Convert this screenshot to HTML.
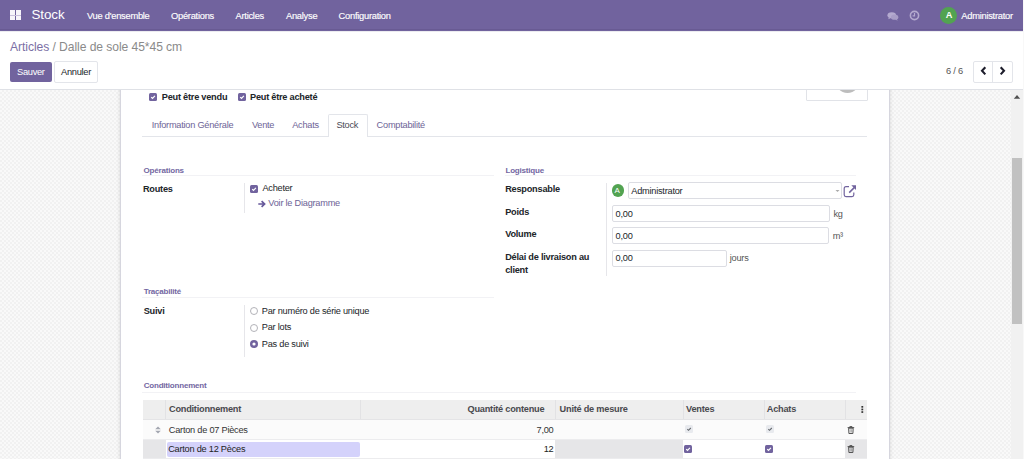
<!DOCTYPE html>
<html><head><meta charset="utf-8"><style>
html,body{margin:0;padding:0;width:1024px;height:459px;overflow:hidden;background:#f5f5f5}
body{position:relative;font-family:"Liberation Sans",sans-serif}
.b{position:absolute;box-sizing:content-box}
.t{position:absolute;white-space:nowrap;font-family:"Liberation Sans",sans-serif}
</style></head><body>
<div class="b" style="left:0px;top:0px;width:1024px;height:459px;background-color:#f6f6f6;background-image:conic-gradient(#f9f9f9 25%,#f1f1f1 0 50%,#f9f9f9 0 75%,#f1f1f1 0);background-size:4px 4px;"></div>
<div class="b" style="left:1023px;top:0px;width:1px;height:459px;background:#f8f8f8;"></div>
<div class="b" style="left:120px;top:80px;width:768px;height:400px;background:#fff;border:1px solid #d6d6de;box-shadow:0 0 4px rgba(0,0,0,0.13)"></div>
<div class="b" style="left:806px;top:59.3px;width:60px;height:39.5px;border:1px solid #e1e3e8;border-radius:1px;background:#fff;overflow:hidden"><div style="position:absolute;left:27.5px;top:7.9px;width:25px;height:25px;border-radius:50%;background:#bdbdbd"></div></div>
<svg class="b" style="left:149px;top:93px" width="8" height="8" viewBox="0 0 8 8"><rect x="0" y="0" width="8" height="8" rx="1.5" fill="#71639e"/><path d="M2.2 4.1 L3.5 5.3 L5.9 2.8" fill="none" stroke="#fff" stroke-width="1.2"/></svg>
<div class="t" style="left:161.8px;top:92.81px;font-size:9.2px;line-height:9.2px;color:#212529;font-weight:700;letter-spacing:-0.23px;">Peut être vendu</div>
<svg class="b" style="left:237.8px;top:93px" width="8" height="8" viewBox="0 0 8 8"><rect x="0" y="0" width="8" height="8" rx="1.5" fill="#71639e"/><path d="M2.2 4.1 L3.5 5.3 L5.9 2.8" fill="none" stroke="#fff" stroke-width="1.2"/></svg>
<div class="t" style="left:250px;top:92.81px;font-size:9.2px;line-height:9.2px;color:#212529;font-weight:700;letter-spacing:-0.23px;">Peut être acheté</div>
<div class="b" style="left:142px;top:135.5px;width:725px;height:1.0px;background:#e3e5ea;"></div>
<div class="b" style="left:327.5px;top:114px;width:38.5px;height:21.6px;border:1px solid #e3e5ea;border-bottom:none;border-radius:2px 2px 0 0;background:#fff"></div>
<div class="t" style="left:151.7px;top:121.01px;font-size:9.2px;line-height:9.2px;color:#6d6396;letter-spacing:-0.23px;">Information Générale</div>
<div class="t" style="left:251.9px;top:121.01px;font-size:9.2px;line-height:9.2px;color:#6d6396;letter-spacing:-0.23px;">Vente</div>
<div class="t" style="left:292.2px;top:121.01px;font-size:9.2px;line-height:9.2px;color:#6d6396;letter-spacing:-0.23px;">Achats</div>
<div class="t" style="left:336.4px;top:121.01px;font-size:9.2px;line-height:9.2px;color:#4a4a55;letter-spacing:-0.23px;">Stock</div>
<div class="t" style="left:376.6px;top:121.01px;font-size:9.2px;line-height:9.2px;color:#6d6396;letter-spacing:-0.23px;">Comptabilité</div>
<div class="t" style="left:143.6px;top:166.83px;font-size:8px;line-height:8px;color:#7367a2;font-weight:700;letter-spacing:-0.2px;">Opérations</div>
<div class="b" style="left:142px;top:174.5px;width:352px;height:1.0px;background:#f2f2f5;"></div>
<div class="t" style="left:505.5px;top:166.83px;font-size:8px;line-height:8px;color:#7367a2;font-weight:700;letter-spacing:-0.2px;">Logistique</div>
<div class="b" style="left:505px;top:174.5px;width:351px;height:1.0px;background:#f2f2f5;"></div>
<div class="t" style="left:142.9px;top:185.21px;font-size:9.2px;line-height:9.2px;color:#212529;font-weight:700;letter-spacing:-0.23px;">Routes</div>
<div class="b" style="left:243.5px;top:183px;width:1.0px;height:30px;background:#e6e6ea;"></div>
<svg class="b" style="left:250px;top:185px" width="8" height="8" viewBox="0 0 8 8"><rect x="0" y="0" width="8" height="8" rx="1.5" fill="#71639e"/><path d="M2.2 4.1 L3.5 5.3 L5.9 2.8" fill="none" stroke="#fff" stroke-width="1.2"/></svg>
<div class="t" style="left:262.4px;top:184.41px;font-size:9.2px;line-height:9.2px;color:#212529;letter-spacing:-0.23px;">Acheter</div>
<svg class="b" style="left:258px;top:199.8px" width="8" height="8" viewBox="0 0 8 8"><path d="M0.3 4 H6.3 M3.6 1.1 L6.6 4 L3.6 6.9" fill="none" stroke="#66589a" stroke-width="1.7"/></svg>
<div class="t" style="left:268.3px;top:198.81px;font-size:9.2px;line-height:9.2px;color:#6d6396;letter-spacing:-0.23px;">Voir le Diagramme</div>
<div class="t" style="left:505.2px;top:185.01px;font-size:9.2px;line-height:9.2px;color:#212529;font-weight:700;letter-spacing:-0.23px;">Responsable</div>
<div class="t" style="left:505.2px;top:207.51px;font-size:9.2px;line-height:9.2px;color:#212529;font-weight:700;letter-spacing:-0.23px;">Poids</div>
<div class="t" style="left:505.2px;top:229.51px;font-size:9.2px;line-height:9.2px;color:#212529;font-weight:700;letter-spacing:-0.23px;">Volume</div>
<div class="t" style="left:505.2px;top:252.81px;font-size:9.2px;line-height:9.2px;color:#212529;font-weight:700;letter-spacing:-0.23px;">Délai de livraison au</div>
<div class="t" style="left:505.2px;top:265.51px;font-size:9.2px;line-height:9.2px;color:#212529;font-weight:700;letter-spacing:-0.23px;">client</div>
<div class="b" style="left:606px;top:183px;width:1px;height:92.5px;background:#e6e6ea;"></div>
<div class="b" style="left:611.5px;top:184px;width:12.5px;height:12.5px;border-radius:50%;background:#52a351"></div>
<div class="t" style="left:614.5px;top:186.83px;font-size:8px;line-height:8px;color:#fff;">A</div>
<div class="b" style="left:627.5px;top:182px;width:212.0px;height:15.300000000000011px;border:1px solid #dcdde3;border-radius:2px;background:#fff"></div>
<div class="t" style="left:631.3px;top:186.51px;font-size:9.2px;line-height:9.2px;color:#212529;letter-spacing:-0.23px;">Administrator</div>
<svg class="b" style="left:835px;top:189px" width="5" height="4" viewBox="0 0 5 4"><path d="M0.5 1 L2.5 3 L4.5 1Z" fill="#aaa"/></svg>
<svg class="b" style="left:843px;top:184px" width="14" height="14" viewBox="0 0 14 14"><path d="M6 2.6 H3 Q1.2 2.6 1.2 4.4 V10.8 Q1.2 12.6 3 12.6 H9 Q10.8 12.6 10.8 10.8 V8.5" fill="none" stroke="#71639e" stroke-width="1.2"/><path d="M6.2 8.6 L11.2 3.6" stroke="#71639e" stroke-width="1.5"/><path d="M8.3 1.3 H13 V6 Z" fill="#71639e"/></svg>
<div class="b" style="left:612px;top:205px;width:215.5px;height:15.300000000000011px;border:1px solid #dcdde3;border-radius:2px;background:#fff"></div>
<div class="t" style="left:615.6px;top:209.51px;font-size:9.2px;line-height:9.2px;color:#212529;letter-spacing:-0.23px;">0,00</div>
<div class="t" style="left:833.4px;top:209.51px;font-size:9.2px;line-height:9.2px;color:#555;letter-spacing:-0.23px;">kg</div>
<div class="b" style="left:612px;top:227.3px;width:215px;height:15.199999999999989px;border:1px solid #dcdde3;border-radius:2px;background:#fff"></div>
<div class="t" style="left:615.6px;top:231.71px;font-size:9.2px;line-height:9.2px;color:#212529;letter-spacing:-0.23px;">0,00</div>
<div class="t" style="left:832.7px;top:231.71px;font-size:9.2px;line-height:9.2px;color:#555;letter-spacing:-0.23px;">m³</div>
<div class="b" style="left:612px;top:249.5px;width:112.5px;height:15.0px;border:1px solid #dcdde3;border-radius:2px;background:#fff"></div>
<div class="t" style="left:615.6px;top:254.21px;font-size:9.2px;line-height:9.2px;color:#212529;letter-spacing:-0.23px;">0,00</div>
<div class="t" style="left:729.8px;top:254.21px;font-size:9.2px;line-height:9.2px;color:#555;letter-spacing:-0.23px;">jours</div>
<div class="t" style="left:143.7px;top:287.73px;font-size:8px;line-height:8px;color:#7367a2;font-weight:700;letter-spacing:-0.2px;">Traçabilité</div>
<div class="b" style="left:142px;top:296.5px;width:352px;height:1.0px;background:#f2f2f5;"></div>
<div class="t" style="left:143.7px;top:307.01px;font-size:9.2px;line-height:9.2px;color:#212529;font-weight:700;letter-spacing:-0.23px;">Suivi</div>
<div class="b" style="left:243.5px;top:305px;width:1.0px;height:51.5px;background:#e6e6ea;"></div>
<svg class="b" style="left:250px;top:307px" width="8" height="8" viewBox="0 0 8 8"><circle cx="4" cy="4" r="3.5" fill="#fff" stroke="#a9a9b0" stroke-width="0.9"/></svg>
<div class="t" style="left:261.8px;top:306.51px;font-size:9.2px;line-height:9.2px;color:#212529;letter-spacing:-0.23px;">Par numéro de série unique</div>
<svg class="b" style="left:250px;top:323.5px" width="8" height="8" viewBox="0 0 8 8"><circle cx="4" cy="4" r="3.5" fill="#fff" stroke="#a9a9b0" stroke-width="0.9"/></svg>
<div class="t" style="left:261.8px;top:323.11px;font-size:9.2px;line-height:9.2px;color:#212529;letter-spacing:-0.23px;">Par lots</div>
<svg class="b" style="left:250px;top:340px" width="8" height="8" viewBox="0 0 8 8"><circle cx="4" cy="4" r="4" fill="#71639e"/><circle cx="4" cy="4" r="1.6" fill="#fff"/></svg>
<div class="t" style="left:261.8px;top:339.51px;font-size:9.2px;line-height:9.2px;color:#212529;letter-spacing:-0.23px;">Pas de suivi</div>
<div class="t" style="left:143.7px;top:382.23px;font-size:8px;line-height:8px;color:#7367a2;font-weight:700;letter-spacing:-0.2px;">Conditionnement</div>
<div class="b" style="left:142px;top:391.5px;width:714px;height:1.0px;background:#f2f2f5;"></div>
<div class="b" style="left:143px;top:400px;width:724px;height:20px;background:#eeeeee;"></div>
<div class="b" style="left:165.3px;top:400px;width:1.0px;height:20px;background:#e2e2e4;"></div>
<div class="b" style="left:360.3px;top:400px;width:1.0px;height:20px;background:#e2e2e4;"></div>
<div class="b" style="left:555.3px;top:400px;width:1.0px;height:20px;background:#e2e2e4;"></div>
<div class="b" style="left:683px;top:400px;width:1px;height:20px;background:#e2e2e4;"></div>
<div class="b" style="left:764px;top:400px;width:1px;height:20px;background:#e2e2e4;"></div>
<div class="b" style="left:845px;top:400px;width:1px;height:20px;background:#e2e2e4;"></div>
<div class="t" style="left:169px;top:404.91px;font-size:9.2px;line-height:9.2px;color:#4a4a4f;font-weight:700;letter-spacing:-0.23px;">Conditionnement</div>
<div class="t" style="right:479.70000000000005px;top:404.91px;font-size:9.2px;line-height:9.2px;color:#4a4a4f;font-weight:700;letter-spacing:-0.23px;">Quantité contenue</div>
<div class="t" style="left:559.6px;top:404.91px;font-size:9.2px;line-height:9.2px;color:#4a4a4f;font-weight:700;letter-spacing:-0.23px;">Unité de mesure</div>
<div class="t" style="left:686.1px;top:404.91px;font-size:9.2px;line-height:9.2px;color:#4a4a4f;font-weight:700;letter-spacing:-0.23px;">Ventes</div>
<div class="t" style="left:766.8px;top:404.91px;font-size:9.2px;line-height:9.2px;color:#4a4a4f;font-weight:700;letter-spacing:-0.23px;">Achats</div>
<svg class="b" style="left:861px;top:405.5px" width="3" height="7" viewBox="0 0 3 7"><rect x="0.4" y="0" width="1.8" height="1.7" fill="#333"/><rect x="0.4" y="2.6" width="1.8" height="1.7" fill="#333"/><rect x="0.4" y="5.2" width="1.8" height="1.7" fill="#333"/></svg>
<div class="b" style="left:143px;top:420px;width:724px;height:19px;background:#fbfbfb;"></div>
<div class="b" style="left:143px;top:419.3px;width:724px;height:1.0px;background:#e4e4e6;"></div>
<div class="b" style="left:143px;top:439px;width:724px;height:1px;background:#ececee;"></div>
<svg class="b" style="left:155.3px;top:425.6px" width="6" height="8" viewBox="0 0 6 8"><path d="M0.2 3.3 L3 0.4 L5.8 3.3Z M0.2 4.7 L3 7.6 L5.8 4.7Z" fill="#a3a6b0"/></svg>
<div class="t" style="left:168.8px;top:425.51px;font-size:9.2px;line-height:9.2px;color:#333;letter-spacing:-0.23px;">Carton de 07 Pièces</div>
<div class="t" style="right:470.5px;top:425.51px;font-size:9.2px;line-height:9.2px;color:#333;letter-spacing:-0.23px;">7,00</div>
<svg class="b" style="left:685.2px;top:425px" width="8" height="8" viewBox="0 0 8 8"><rect x="0" y="0" width="8" height="8" rx="1.5" fill="#e8eaee"/><path d="M2.3 4.2 L3.5 5.3 L5.8 3" fill="none" stroke="#666a70" stroke-width="1.1"/></svg>
<svg class="b" style="left:766px;top:425px" width="8" height="8" viewBox="0 0 8 8"><rect x="0" y="0" width="8" height="8" rx="1.5" fill="#e8eaee"/><path d="M2.3 4.2 L3.5 5.3 L5.8 3" fill="none" stroke="#666a70" stroke-width="1.1"/></svg>
<svg class="b" style="left:847px;top:425.5px" width="8" height="8" viewBox="0 0 8 8"><path d="M0.6 1.6 H7.2 M2.8 1.5 V0.6 H5 V1.5" fill="none" stroke="#444" stroke-width="0.9"/><path d="M1.6 2.2 H6.2 L5.9 7.5 H1.9Z" fill="none" stroke="#444" stroke-width="0.9"/><path d="M3.2 3.2 V6.5 M4.6 3.2 V6.5" stroke="#777" stroke-width="0.6"/></svg>
<div class="b" style="left:143px;top:440px;width:724px;height:19px;background:#fff;"></div>
<div class="b" style="left:143px;top:440px;width:23px;height:18px;background:#e6e6e8;"></div>
<div class="b" style="left:555.3px;top:440px;width:127.70000000000005px;height:18px;background:#e6e6e8;"></div>
<div class="b" style="left:845px;top:440px;width:22px;height:18px;background:#e6e6e8;"></div>
<div class="b" style="left:143px;top:458px;width:724px;height:1px;background:#ececee;"></div>
<div class="b" style="left:167px;top:441.7px;width:193px;height:15px;background:#d4d2fb;border-radius:2px"></div>
<div class="t" style="left:168.2px;top:444.91px;font-size:9.2px;line-height:9.2px;color:#222;letter-spacing:-0.23px;">Carton de 12 Pèces</div>
<div class="t" style="right:470.5px;top:444.91px;font-size:9.2px;line-height:9.2px;color:#222;letter-spacing:-0.23px;">12</div>
<svg class="b" style="left:684px;top:445.2px" width="8" height="8" viewBox="0 0 8 8"><rect x="0" y="0" width="8" height="8" rx="1.5" fill="#71639e"/><path d="M2.2 4.1 L3.5 5.3 L5.9 2.8" fill="none" stroke="#fff" stroke-width="1.2"/></svg>
<svg class="b" style="left:765px;top:445.2px" width="8" height="8" viewBox="0 0 8 8"><rect x="0" y="0" width="8" height="8" rx="1.5" fill="#71639e"/><path d="M2.2 4.1 L3.5 5.3 L5.9 2.8" fill="none" stroke="#fff" stroke-width="1.2"/></svg>
<svg class="b" style="left:847px;top:445.2px" width="8" height="8" viewBox="0 0 8 8"><path d="M0.6 1.6 H7.2 M2.8 1.5 V0.6 H5 V1.5" fill="none" stroke="#444" stroke-width="0.9"/><path d="M1.6 2.2 H6.2 L5.9 7.5 H1.9Z" fill="none" stroke="#444" stroke-width="0.9"/><path d="M3.2 3.2 V6.5 M4.6 3.2 V6.5" stroke="#777" stroke-width="0.6"/></svg>
<div class="b" style="left:0px;top:30px;width:1023px;height:59px;background:#fff;"></div>
<div class="b" style="left:0px;top:89px;width:1023px;height:1px;background:#dfe1e6;"></div>
<div class="t" style="left:10px;top:40.66px;font-size:12.1px;line-height:12.1px;color:#212529;letter-spacing:-0.06px;"><span style="color:#7b6fa5">Articles</span><span style="color:#8a8a8a"> / Dalle de sole 45*45 cm</span></div>
<div class="b" style="left:10px;top:62px;width:42px;height:20px;background:#71639e;border-radius:2px;"></div>
<div class="t" style="left:17px;top:67.83px;font-size:9.3px;line-height:9.3px;color:#fff;letter-spacing:-0.3px;">Sauver</div>
<div class="b" style="left:54px;top:61px;width:42px;height:20px;border:1px solid #e3e5ea;border-radius:2px;background:#fff"></div>
<div class="t" style="left:61px;top:67.83px;font-size:9.3px;line-height:9.3px;color:#212529;letter-spacing:-0.3px;">Annuler</div>
<div class="t" style="left:946px;top:66.73px;font-size:9.3px;line-height:9.3px;color:#555;letter-spacing:-0.25px;">6 / 6</div>
<div class="b" style="left:973px;top:61px;width:38px;height:20px;border:1px solid #e3e5ea;border-radius:2px;background:#fff"></div>
<div class="b" style="left:992px;top:62px;width:1px;height:20px;background:#e3e5ea;"></div>
<svg class="b" style="left:978px;top:65px" width="30" height="12" viewBox="0 0 30 12"><path d="M7.3 2.2 L4 5.8 L7.3 9.4" fill="none" stroke="#1d1d2b" stroke-width="2.1"/><path d="M22.7 2.2 L26 5.8 L22.7 9.4" fill="none" stroke="#1d1d2b" stroke-width="2.1"/></svg>
<div class="b" style="left:1011px;top:90px;width:12px;height:369px;background:#f1f1f1;"></div>
<div class="b" style="left:1012px;top:158px;width:10px;height:166px;background:#c1c1c1;"></div>
<svg class="b" style="left:1013px;top:93px" width="8" height="7" viewBox="0 0 8 7"><path d="M0.8 5.8 L4 2 L7.2 5.8Z" fill="#505050"/></svg>
<div class="b" style="left:0px;top:0px;width:1023px;height:30.5px;background:#71639e;"></div>
<div class="b" style="left:0px;top:29.3px;width:1023px;height:1.1999999999999993px;background:#685a93;"></div>
<div class="b" style="left:0px;top:30.5px;width:1023px;height:0.8000000000000007px;background:#ececf0;"></div>
<div class="b" style="left:10px;top:10px;width:5px;height:9.600000000000001px;background:#f6f4fa;"></div>
<div class="b" style="left:16px;top:10px;width:5px;height:9.600000000000001px;background:#f6f4fa;"></div>
<div class="b" style="left:10px;top:14.6px;width:11px;height:0.7000000000000011px;background:#c9c0dc;"></div>
<div class="t" style="left:31.5px;top:8.36px;font-size:13.4px;line-height:13.4px;color:#fff;letter-spacing:-0.1px;">Stock</div>
<div class="t" style="left:87px;top:11.93px;font-size:9.3px;line-height:9.3px;color:#fff;letter-spacing:-0.25px;-webkit-text-stroke:0.15px #fff;">Vue d'ensemble</div>
<div class="t" style="left:171px;top:11.93px;font-size:9.3px;line-height:9.3px;color:#fff;letter-spacing:-0.25px;-webkit-text-stroke:0.15px #fff;">Opérations</div>
<div class="t" style="left:235.5px;top:11.93px;font-size:9.3px;line-height:9.3px;color:#fff;letter-spacing:-0.25px;-webkit-text-stroke:0.15px #fff;">Articles</div>
<div class="t" style="left:286px;top:11.93px;font-size:9.3px;line-height:9.3px;color:#fff;letter-spacing:-0.25px;-webkit-text-stroke:0.15px #fff;">Analyse</div>
<div class="t" style="left:338.6px;top:11.93px;font-size:9.3px;line-height:9.3px;color:#fff;letter-spacing:-0.25px;-webkit-text-stroke:0.15px #fff;">Configuration</div>
<svg class="b" style="left:886.8px;top:11.8px" width="12" height="9" viewBox="0 0 14 11"><ellipse cx="5.5" cy="4" rx="5.3" ry="3.7" fill="#b4aacf"/><path d="M2 6.5 L1.2 9 L4.5 7.3Z" fill="#b4aacf"/><ellipse cx="9" cy="6.3" rx="4.5" ry="3.2" fill="#a89dc6"/><path d="M11.5 8.5 L12.8 10.6 L9.8 9.3Z" fill="#a89dc6"/></svg>
<svg class="b" style="left:909px;top:10.2px" width="11" height="11" viewBox="0 0 11 11"><circle cx="5.5" cy="5.5" r="4.1" fill="none" stroke="#b4aacf" stroke-width="1.6"/><path d="M5.5 3 V5.8 H3.6" fill="none" stroke="#b4aacf" stroke-width="1.2"/></svg>
<div class="b" style="left:940px;top:7px;width:17px;height:17px;border-radius:50%;background:#52a351;"></div>
<div class="t" style="left:945.8px;top:10.81px;font-size:9.2px;line-height:9.2px;color:#fff;font-weight:700;">A</div>
<div class="t" style="left:961.3px;top:11.73px;font-size:9.3px;line-height:9.3px;color:#fff;letter-spacing:-0.25px;-webkit-text-stroke:0.15px #fff;">Administrator</div>
</body></html>
